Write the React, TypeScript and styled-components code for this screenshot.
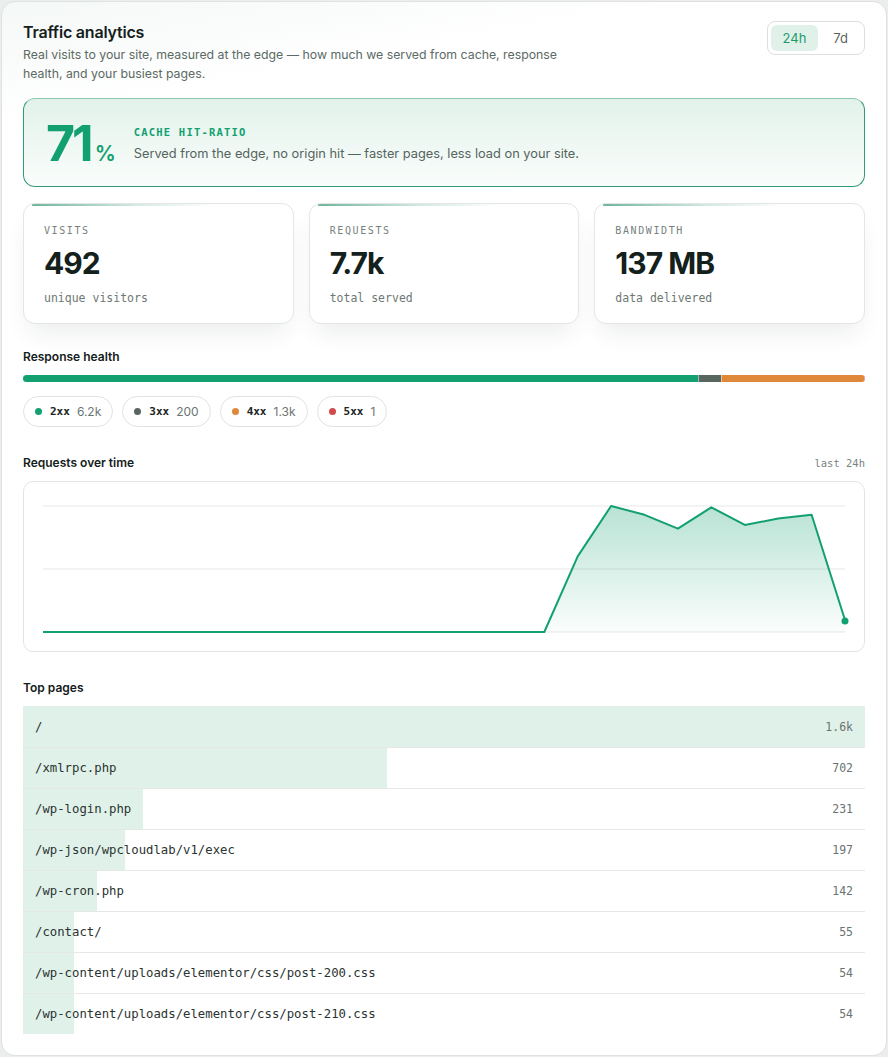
import React from 'react';
import styled, { createGlobalStyle } from 'styled-components';

const GlobalStyle = createGlobalStyle`
    html, body {
        margin: 0;
        padding: 0;
        background: #eceeed;
    }
    body {
        font-family: Inter, "Noto Sans", sans-serif;
        color: #14201b;
    }
`;

const mono = `"DejaVu Sans Mono", "Liberation Mono", monospace`;

const Page = styled.div`
    padding: 1px 1px 3px 1px;
`;

const Card = styled.div`
    width: 886px;
    box-sizing: border-box;
    border: 1px solid #dfe2e0;
    border-radius: 14px;
    background: linear-gradient(170deg, #f4f8f6 0%, #ffffff 120px);
    padding: 19px 21px 21px 21px;
`;

const Header = styled.div`
    display: flex;
    justify-content: space-between;
    align-items: flex-start;
`;

const Title = styled.h1`
    margin: 0;
    font-size: 16px;
    line-height: 22px;
    font-weight: 600;
    letter-spacing: -0.2px;
    color: #14201b;
`;

const Subtitle = styled.p`
    margin: 2px 0 0;
    max-width: 545px;
    font-size: 12.3px;
    line-height: 19px;
    color: #5b6a64;
`;

const Toggle = styled.div`
    display: flex;
    gap: 2px;
    padding: 3px;
    border: 1px solid #dcdfdd;
    border-radius: 8px;
    background: #fff;
`;

const ToggleButton = styled.button<{ $active?: boolean }>`
    height: 26px;
    padding: 0 ${(p) => (p.$active ? '12px' : '13px')};
    border: none;
    border-radius: 6px;
    font-family: Inter, sans-serif;
    font-size: 13px;
    background: ${(p) => (p.$active ? '#dff1e9' : 'transparent')};
    color: ${(p) => (p.$active ? '#1e9b6e' : '#5c6460')};
`;

const CacheCard = styled.div`
    margin-top: 15px;
    height: 89px;
    box-sizing: border-box;
    display: flex;
    align-items: center;
    gap: 18px;
    padding: 0 22px;
    border: 1px solid #2f9c74;
    border-top-color: #8cc8b0;
    border-radius: 12px;
    background: linear-gradient(180deg, #e2f2eb 0%, #fafdfb 100%);
`;

const BigNumber = styled.div`
    display: flex;
    align-items: baseline;
    color: #12a070;
    font-weight: 700;
`;

const BigDigits = styled.span`
    font-size: 50px;
    line-height: 50px;
    letter-spacing: -3px;
`;

const BigUnit = styled.span`
    font-size: 21px;
    font-weight: 600;
    margin-left: 4px;
`;

const CacheText = styled.div`
    display: flex;
    flex-direction: column;
    gap: 8px;
    padding-top: 2px;
`;

const CacheLabel = styled.div`
    font-family: ${mono};
    font-size: 10.5px;
    font-weight: 700;
    letter-spacing: 1.2px;
    color: #12a070;
`;

const CacheDesc = styled.div`
    font-size: 12.8px;
    color: #55645e;
`;

const Stats = styled.div`
    margin-top: 16px;
    display: grid;
    grid-template-columns: repeat(3, 1fr);
    gap: 15px;
`;

const StatCard = styled.div`
    position: relative;
    height: 121px;
    box-sizing: border-box;
    padding: 21px 20px 0;
    border: 1px solid #e3e6e4;
    border-radius: 12px;
    background: #fff;
    box-shadow: 0 14px 26px -8px rgba(20, 40, 30, 0.1);
    overflow: hidden;
    &::before {
        content: '';
        position: absolute;
        top: 0;
        left: 8px;
        right: 0;
        height: 1.5px;
        background: linear-gradient(90deg, #6fb59a 0%, rgba(90, 169, 138, 0.25) 40%, transparent 70%);
    }
`;

const StatLabel = styled.div`
    font-family: ${mono};
    font-size: 10px;
    letter-spacing: 1.6px;
    color: #76827d;
`;

const StatValue = styled.div`
    margin-top: 9px;
    font-size: 30px;
    line-height: 36px;
    font-weight: 700;
    letter-spacing: -1px;
    color: #13201b;
`;

const StatSub = styled.div`
    margin-top: 10px;
    font-family: ${mono};
    font-size: 11.5px;
    color: #6d7873;
`;

const SectionHead = styled.div<{ $top: number }>`
    margin-top: ${(p) => p.$top}px;
    display: flex;
    justify-content: space-between;
    align-items: center;
`;

const SectionTitle = styled.h2`
    margin: 0;
    font-size: 12px;
    line-height: 16px;
    font-weight: 600;
    color: #14201b;
`;

const SectionMeta = styled.span`
    font-family: ${mono};
    font-size: 10.5px;
    color: #7a837f;
`;

const HealthBar = styled.div`
    margin-top: 10px;
    display: flex;
    height: 7px;
    border-radius: 4px;
    overflow: hidden;
    background: #eee;
`;

const HealthSeg = styled.div<{ $color: string }>`
    background: ${(p) => p.$color};
    & + & {
        border-left: 1px solid rgba(255, 255, 255, 0.5);
    }
`;

const Pills = styled.div`
    margin-top: 14px;
    display: flex;
    gap: 9px;
`;

const Pill = styled.div`
    display: flex;
    align-items: center;
    height: 31px;
    box-sizing: border-box;
    padding: 0 11px;
    border: 1px solid #e0e3e1;
    border-radius: 16px;
    background: #fff;
`;

const Dot = styled.span<{ $color: string }>`
    width: 7px;
    height: 7px;
    border-radius: 50%;
    background: ${(p) => p.$color};
    margin-right: 8px;
`;

const PillCode = styled.span`
    font-family: ${mono};
    font-size: 11px;
    font-weight: 700;
    color: #1a2420;
    margin-right: 7px;
`;

const PillCount = styled.span`
    font-size: 12px;
    color: #6b7571;
`;

const ChartCard = styled.div`
    margin-top: 10px;
    height: 171px;
    box-sizing: border-box;
    border: 1px solid #e3e5e4;
    border-radius: 10px;
    background: #fff;
    svg {
        display: block;
    }
`;

const Table = styled.div`
    margin-top: 10px;
    display: flex;
    flex-direction: column;
`;

const Row = styled.div`
    position: relative;
    height: 41px;
    box-sizing: border-box;
    display: flex;
    align-items: center;
    justify-content: space-between;
    padding: 0 12px;
    & + & {
        border-top: 1px solid #e6e8e7;
    }
`;

const RowFill = styled.div`
    position: absolute;
    left: 0;
    top: 0;
    bottom: 0;
    background: #e0f1ea;
`;

const RowPath = styled.span`
    position: relative;
    font-family: ${mono};
    font-size: 12.3px;
    color: #2a3330;
`;

const RowCount = styled.span`
    position: relative;
    font-family: ${mono};
    font-size: 11.5px;
    color: #6a7370;
`;

const codes = [
    { code: '2xx', count: '6.2k', value: 6200, color: '#12a070' },
    { code: '3xx', count: '200', value: 200, color: '#586660' },
    { code: '4xx', count: '1.3k', value: 1300, color: '#e0883a' },
    { code: '5xx', count: '1', value: 1, color: '#d24b4b' },
];

const series = [0, 0, 0, 0, 0, 0, 0, 0, 0, 0, 0, 0, 0, 0, 0, 0, 0.6, 1, 0.93, 0.82, 0.99, 0.85, 0.9, 0.93, 0.095];

const pages = [
    { path: '/', count: '1.6k', value: 1625 },
    { path: '/xmlrpc.php', count: '702', value: 702 },
    { path: '/wp-login.php', count: '231', value: 231 },
    { path: '/wp-json/wpcloudlab/v1/exec', count: '197', value: 197 },
    { path: '/wp-cron.php', count: '142', value: 142 },
    { path: '/contact/', count: '55', value: 55 },
    { path: '/wp-content/uploads/elementor/css/post-200.css', count: '54', value: 54 },
    { path: '/wp-content/uploads/elementor/css/post-210.css', count: '54', value: 54 },
];

const Chart = () => {
    const left = 19;
    const right = 821;
    const top = 24;
    const base = 150;
    const step = (right - left) / (series.length - 1);
    const pts = series.map((v, i) => [left + i * step, base - v * (base - top)]);
    const line = pts.map((p, i) => `${i ? 'L' : 'M'}${p[0].toFixed(1)} ${p[1].toFixed(1)}`).join(' ');
    const area = `${line} L${right} ${base} L${left} ${base} Z`;
    const last = pts[pts.length - 1];
    return (
        <svg width="840" height="169" viewBox="0 0 840 169">
            <defs>
                <linearGradient id="fillGrad" x1="0" y1="0" x2="0" y2="1">
                    <stop offset="0%" stopColor="#12a070" stopOpacity="0.3" />
                    <stop offset="100%" stopColor="#12a070" stopOpacity="0.02" />
                </linearGradient>
            </defs>
            {[top, (top + base) / 2, base].map((y) => (
                <line key={y} x1={left} x2={right} y1={y} y2={y} stroke="#efefef" strokeWidth="1.5" />
            ))}
            <path d={area} fill="url(#fillGrad)" />
            <path d={line} fill="none" stroke="#12a070" strokeWidth="2" strokeLinejoin="round" />
            <circle cx={last[0]} cy={last[1] + 1} r="3.5" fill="#12a070" />
        </svg>
    );
};

const App = () => {
    const maxPage = pages[0].value;
    return (
        <Page>
            <GlobalStyle />
            <Card>
                <Header>
                    <div>
                        <Title>Traffic analytics</Title>
                        <Subtitle>
                            Real visits to your site, measured at the edge — how much we served from cache, response
                            health, and your busiest pages.
                        </Subtitle>
                    </div>
                    <Toggle>
                        <ToggleButton $active>24h</ToggleButton>
                        <ToggleButton>7d</ToggleButton>
                    </Toggle>
                </Header>

                <CacheCard>
                    <BigNumber>
                        <BigDigits>71</BigDigits>
                        <BigUnit>%</BigUnit>
                    </BigNumber>
                    <CacheText>
                        <CacheLabel>CACHE HIT-RATIO</CacheLabel>
                        <CacheDesc>Served from the edge, no origin hit — faster pages, less load on your site.</CacheDesc>
                    </CacheText>
                </CacheCard>

                <Stats>
                    <StatCard>
                        <StatLabel>VISITS</StatLabel>
                        <StatValue>492</StatValue>
                        <StatSub>unique visitors</StatSub>
                    </StatCard>
                    <StatCard>
                        <StatLabel>REQUESTS</StatLabel>
                        <StatValue>7.7k</StatValue>
                        <StatSub>total served</StatSub>
                    </StatCard>
                    <StatCard>
                        <StatLabel>BANDWIDTH</StatLabel>
                        <StatValue>137 MB</StatValue>
                        <StatSub>data delivered</StatSub>
                    </StatCard>
                </Stats>

                <SectionHead $top={25}>
                    <SectionTitle>Response health</SectionTitle>
                </SectionHead>
                <HealthBar>
                    {codes.map((c) => (
                        <HealthSeg key={c.code} $color={c.color} style={{ flexGrow: c.value, flexBasis: 0 }} />
                    ))}
                </HealthBar>
                <Pills>
                    {codes.map((c) => (
                        <Pill key={c.code}>
                            <Dot $color={c.color} />
                            <PillCode>{c.code}</PillCode>
                            <PillCount>{c.count}</PillCount>
                        </Pill>
                    ))}
                </Pills>

                <SectionHead $top={28}>
                    <SectionTitle>Requests over time</SectionTitle>
                    <SectionMeta>last 24h</SectionMeta>
                </SectionHead>
                <ChartCard>
                    <Chart />
                </ChartCard>

                <SectionHead $top={28}>
                    <SectionTitle>Top pages</SectionTitle>
                </SectionHead>
                <Table>
                    {pages.map((p) => (
                        <Row key={p.path}>
                            <RowFill style={{ width: `${Math.max((p.value / maxPage) * 100, 6)}%` }} />
                            <RowPath>{p.path}</RowPath>
                            <RowCount>{p.count}</RowCount>
                        </Row>
                    ))}
                </Table>
            </Card>
        </Page>
    );
};

export default App;
